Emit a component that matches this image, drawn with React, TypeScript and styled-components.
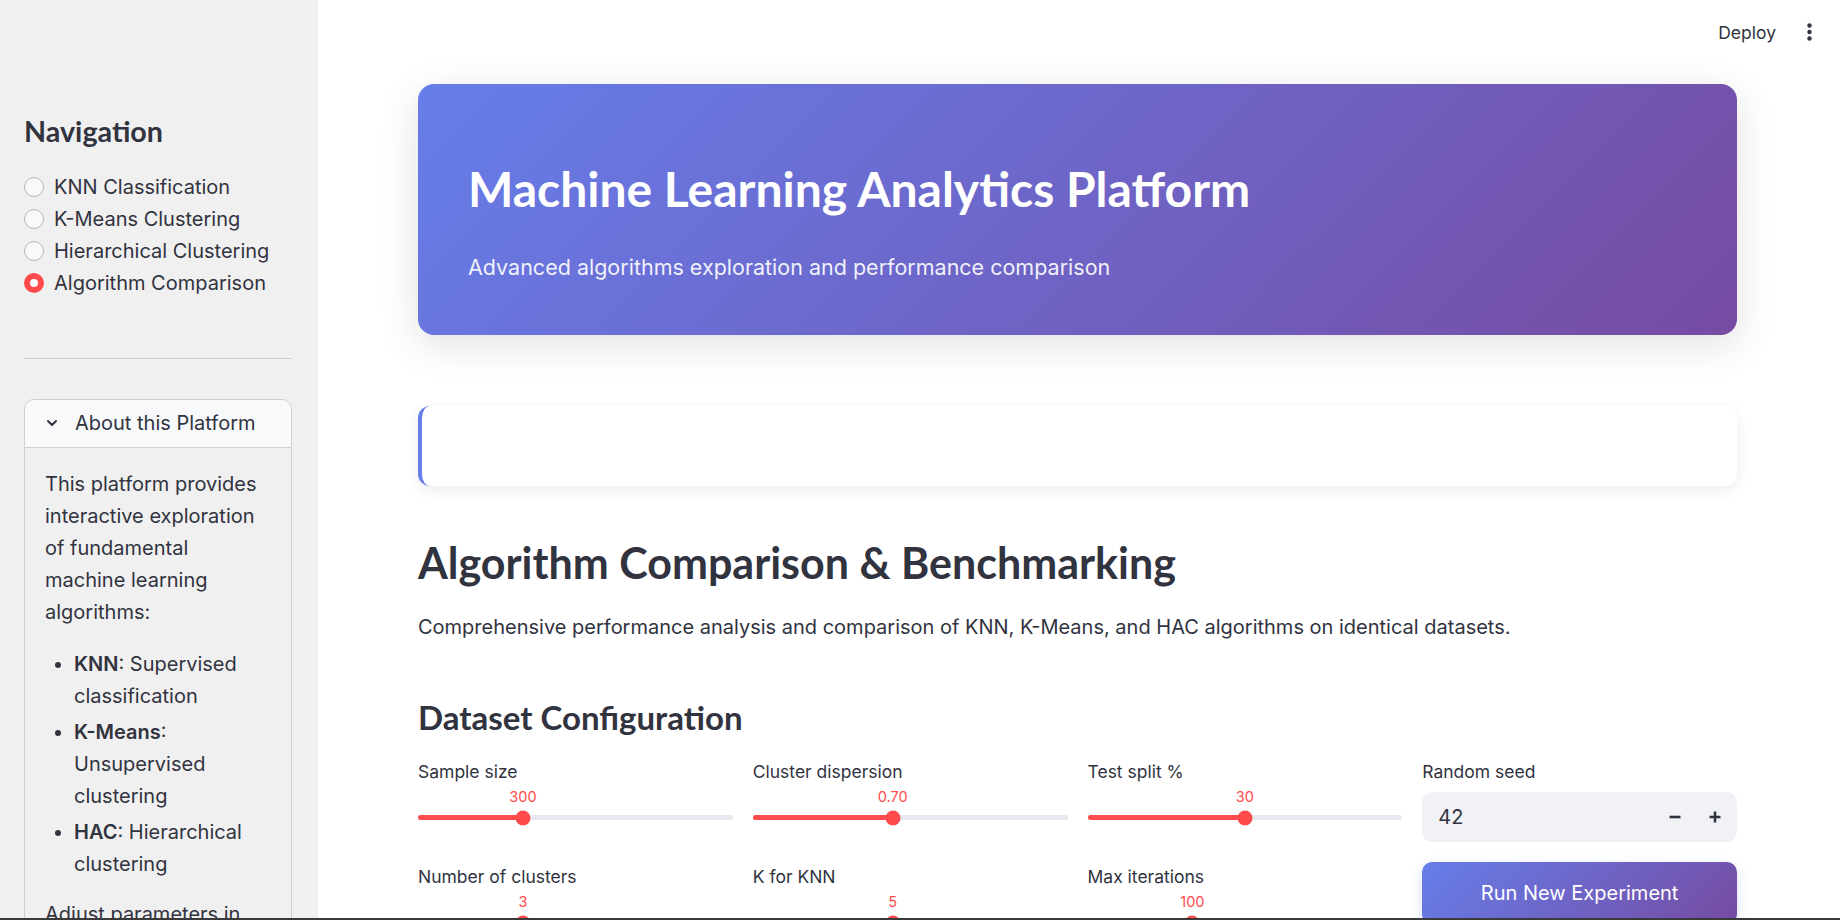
import React from "react";
import styled, { createGlobalStyle } from "styled-components";

const HEAD = `Lato, "Noto Sans", sans-serif`;
const BODY = `Inter, "Noto Sans", sans-serif`;
const TEXT = "#31333f";
const RED = "#ff4b4b";
const GRAD = "linear-gradient(135deg, #667eea 0%, #764ba2 100%)";

const GlobalStyle = createGlobalStyle`
  html, body { margin: 0; padding: 0; height: 100%; }
  body { font-family: ${BODY}; color: ${TEXT}; background: #ffffff; overflow: hidden; }
  *, *::before, *::after { box-sizing: border-box; }
`;

const Shell = styled.div`
  display: flex;
  height: 100vh;
  overflow: hidden;
`;

const Sidebar = styled.aside`
  width: 318px;
  flex: none;
  background: #f0f0f0;
  padding: 115px 26px 0 24px;
  overflow: hidden;
`;

const SideTitle = styled.h2`
  margin: 0 0 22px;
  font-family: ${HEAD};
  font-weight: 700;
  font-size: 28.7px;
  line-height: 33.6px;
  color: ${TEXT};
`;

const RadioList = styled.div`
  display: flex;
  flex-direction: column;
`;

const RadioItem = styled.label`
  display: flex;
  align-items: center;
  gap: 10px;
  height: 32px;
  font-size: 20px;
  color: ${TEXT};
`;

const RadioDot = styled.span<{ $on?: boolean }>`
  width: 20px;
  height: 20px;
  border-radius: 50%;
  flex: none;
  position: relative;
  background: ${(p) => (p.$on ? RED : "#f9f9f9")};
  border: ${(p) => (p.$on ? "none" : "1px solid #b4b4b8")};
  &::after {
    content: "";
    display: ${(p) => (p.$on ? "block" : "none")};
    position: absolute;
    left: 50%;
    top: 50%;
    width: 8px;
    height: 8px;
    border-radius: 50%;
    background: #ffffff;
    transform: translate(-50%, -50%);
  }
`;

const Divider = styled.hr`
  margin: 59px 0 40px;
  border: none;
  border-top: 1px solid #cfcfd2;
`;

const Expander = styled.div`
  border: 1px solid #cfcfd2;
  border-radius: 10px;
  overflow: hidden;
`;

const ExpanderHead = styled.div`
  display: flex;
  align-items: center;
  gap: 17px;
  height: 48px;
  padding-left: 21px;
  background: #f8f9fb;
  border-bottom: 1px solid #cfcfd2;
  font-size: 20px;
  color: ${TEXT};
`;

const ExpanderBody = styled.div`
  padding: 20px 20px 0 20px;
  font-size: 20px;
  line-height: 32px;
  color: ${TEXT};
  p { margin: 0 0 20px; }
  ul { margin: 0 0 18px; padding-left: 29px; }
  li { margin-bottom: 4px; }
  b { font-weight: 600; }
`;

const Main = styled.main`
  flex: 1;
  display: flex;
  flex-direction: column;
  overflow: hidden;
  background: #ffffff;
`;

const Topbar = styled.header`
  height: 64px;
  flex: none;
  display: flex;
  align-items: center;
  justify-content: flex-end;
  gap: 31px;
  padding-right: 28px;
`;

const DeployLink = styled.span`
  font-size: 17.5px;
  color: ${TEXT};
`;

const Content = styled.div`
  padding: 20px 103px 0 100px;
`;

const Hero = styled.section`
  background: ${GRAD};
  border-radius: 16px;
  padding: 76px 50px 51.5px;
  box-shadow: 0 10px 40px rgba(0, 0, 0, 0.12);
`;

const HeroTitle = styled.h1`
  margin: 0;
  font-family: ${HEAD};
  font-weight: 700;
  font-size: 48px;
  line-height: 57.6px;
  color: #ffffff;
`;

const HeroSub = styled.p`
  margin: 32px 0 0;
  font-size: 21.5px;
  line-height: 34px;
  color: rgba(255, 255, 255, 0.92);
`;

const InfoCard = styled.div`
  margin-top: 71px;
  height: 80px;
  background: #ffffff;
  border-left: 4px solid #667eea;
  border-radius: 12px;
  box-shadow: 0 4px 14px rgba(0, 0, 0, 0.08);
`;

const SectionTitle = styled.h2`
  margin: 51px 0 0;
  font-family: ${HEAD};
  font-weight: 700;
  font-size: 43px;
  line-height: 51.6px;
  color: ${TEXT};
`;

const Description = styled.p`
  margin: 22px 0 0;
  font-size: 20px;
  line-height: 32px;
  color: ${TEXT};
`;

const SubTitle = styled.h3`
  margin: 55.5px 0 0;
  font-family: ${HEAD};
  font-weight: 700;
  font-size: 33px;
  line-height: 39.6px;
  color: ${TEXT};
`;

const ControlGrid = styled.div`
  margin-top: 20px;
  display: grid;
  grid-template-columns: repeat(4, 1fr);
  gap: 20px;
`;

const Column = styled.div`
  display: flex;
  flex-direction: column;
  gap: 20px;
`;

const Field = styled.div`
  display: flex;
  flex-direction: column;
`;

const FieldLabel = styled.div`
  font-size: 17.5px;
  line-height: 28px;
  color: ${TEXT};
`;

const SliderBody = styled.div`
  position: relative;
  height: 57px;
`;

const Track = styled.div`
  position: relative;
  margin-top: 29.5px;
  height: 5px;
  border-radius: 3px;
  background: #e6e9ef;
`;

const TrackFill = styled.div`
  position: absolute;
  left: 0;
  top: 0;
  bottom: 0;
  border-radius: 3px;
  background: ${RED};
`;

const Thumb = styled.div`
  position: absolute;
  top: 50%;
  width: 15px;
  height: 15px;
  border-radius: 50%;
  background: ${RED};
  transform: translate(-50%, -50%);
`;

const ThumbValue = styled.div`
  position: absolute;
  top: 1px;
  transform: translateX(-50%);
  font-size: 14.5px;
  line-height: 20px;
  color: ${RED};
  white-space: nowrap;
`;

const NumberBox = styled.div`
  margin-top: 6px;
  height: 50px;
  display: flex;
  align-items: center;
  padding: 0 2px 0 16px;
  border-radius: 10px;
  background: #f0f2f6;
`;

const NumberValue = styled.span`
  flex: 1;
  font-size: 20px;
  color: ${TEXT};
`;

const StepButton = styled.span`
  width: 40px;
  height: 100%;
  display: flex;
  align-items: center;
  justify-content: center;
  color: ${TEXT};
`;

const RunButton = styled.button`
  height: 62px;
  border: none;
  border-radius: 10px;
  background: ${GRAD};
  color: #ffffff;
  font-family: ${BODY};
  font-size: 20px;
  box-shadow: 0 4px 12px rgba(102, 126, 234, 0.25);
`;

const WindowEdge = styled.div`
  position: fixed;
  left: 0;
  right: 0;
  bottom: 0;
  height: 2px;
  background: #3a3a3a;
`;

type SliderProps = { label: string; value: string; pct: number };

function Slider({ label, value, pct }: SliderProps) {
  const left = `${pct * 100}%`;
  return (
    <Field>
      <FieldLabel>{label}</FieldLabel>
      <SliderBody>
        <ThumbValue style={{ left }}>{value}</ThumbValue>
        <Track>
          <TrackFill style={{ width: left }} />
          <Thumb style={{ left }} />
        </Track>
      </SliderBody>
    </Field>
  );
}

const Chevron = () => (
  <svg width="12" height="8" viewBox="0 0 12 8" fill="none">
    <path d="M2 2l4 4 4-4" stroke={TEXT} strokeWidth="2" strokeLinecap="round" strokeLinejoin="round" />
  </svg>
);

const Kebab = () => (
  <svg width="5" height="18" viewBox="0 0 5 18">
    <circle cx="2.5" cy="2.5" r="2.2" fill={TEXT} />
    <circle cx="2.5" cy="9" r="2.2" fill={TEXT} />
    <circle cx="2.5" cy="15.5" r="2.2" fill={TEXT} />
  </svg>
);

const Minus = () => (
  <svg width="14" height="14" viewBox="0 0 14 14">
    <path d="M1.5 7h11" stroke={TEXT} strokeWidth="2.6" strokeLinecap="butt" />
  </svg>
);

const Plus = () => (
  <svg width="14" height="14" viewBox="0 0 14 14">
    <path d="M1.5 7h11M7 1.5v11" stroke={TEXT} strokeWidth="2.6" strokeLinecap="butt" />
  </svg>
);

const navItems = ["KNN Classification", "K-Means Clustering", "Hierarchical Clustering", "Algorithm Comparison"];

export default function App() {
  return (
    <>
      <GlobalStyle />
      <Shell>
        <Sidebar>
          <SideTitle>Navigation</SideTitle>
          <RadioList>
            {navItems.map((n, i) => (
              <RadioItem key={n}>
                <RadioDot $on={i === 3} />
                {n}
              </RadioItem>
            ))}
          </RadioList>
          <Divider />
          <Expander>
            <ExpanderHead>
              <Chevron />
              About this Platform
            </ExpanderHead>
            <ExpanderBody>
              <p>This platform provides interactive exploration of fundamental machine learning algorithms:</p>
              <ul>
                <li><b>KNN</b>: Supervised classification</li>
                <li><b>K-Means</b>: Unsupervised clustering</li>
                <li><b>HAC</b>: Hierarchical clustering</li>
              </ul>
              <p>Adjust parameters in the main panel to explore algorithm behaviour.</p>
            </ExpanderBody>
          </Expander>
        </Sidebar>
        <Main>
          <Topbar>
            <DeployLink>Deploy</DeployLink>
            <Kebab />
          </Topbar>
          <Content>
            <Hero>
              <HeroTitle>Machine Learning Analytics Platform</HeroTitle>
              <HeroSub>Advanced algorithms exploration and performance comparison</HeroSub>
            </Hero>
            <InfoCard />
            <SectionTitle>Algorithm Comparison &amp; Benchmarking</SectionTitle>
            <Description>
              Comprehensive performance analysis and comparison of KNN, K-Means, and HAC algorithms on identical datasets.
            </Description>
            <SubTitle>Dataset Configuration</SubTitle>
            <ControlGrid>
              <Column>
                <Slider label="Sample size" value="300" pct={1 / 3} />
                <Slider label="Number of clusters" value="3" pct={1 / 3} />
              </Column>
              <Column>
                <Slider label="Cluster dispersion" value="0.70" pct={4 / 9} />
                <Slider label="K for KNN" value="5" pct={4 / 9} />
              </Column>
              <Column>
                <Slider label="Test split %" value="30" pct={0.5} />
                <Slider label="Max iterations" value="100" pct={1 / 3} />
              </Column>
              <Column>
                <Field>
                  <FieldLabel>Random seed</FieldLabel>
                  <NumberBox>
                    <NumberValue>42</NumberValue>
                    <StepButton><Minus /></StepButton>
                    <StepButton><Plus /></StepButton>
                  </NumberBox>
                </Field>
                <RunButton>Run New Experiment</RunButton>
              </Column>
            </ControlGrid>
          </Content>
        </Main>
      </Shell>
      <WindowEdge />
    </>
  );
}
